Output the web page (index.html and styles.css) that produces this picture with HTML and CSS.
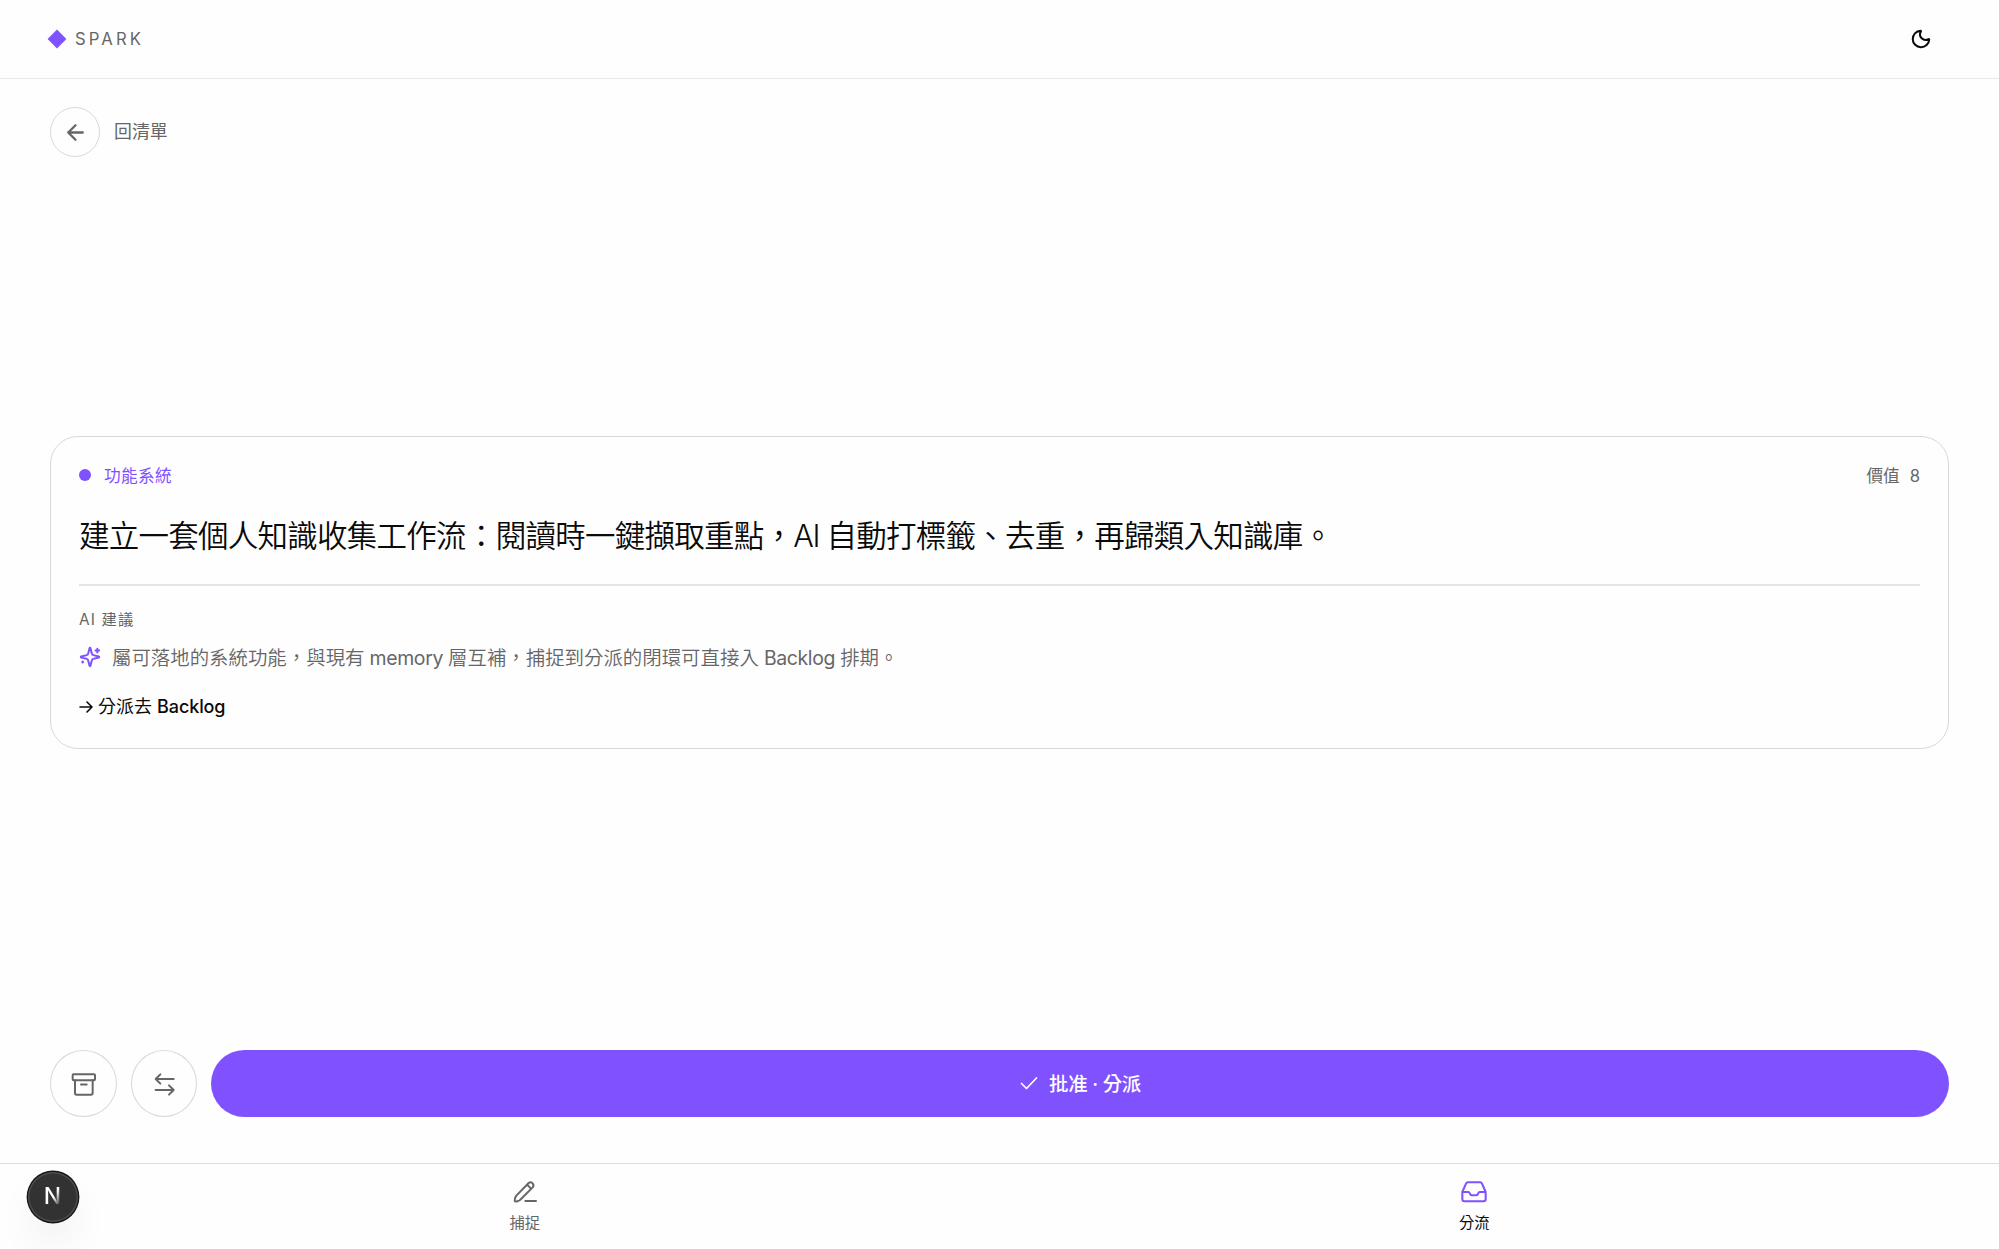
FILE: index.html
```html
<!DOCTYPE html>
<html lang="zh-Hant">

<head>
    <meta charset="UTF-8">
    <meta name="viewport" content="width=device-width, initial-scale=1.0">
    <title>Spark</title>
    <link rel="stylesheet" href="styles.css">
</head>

<body>
    <header class="header">
        <div class="brand">
            <svg class="brand-mark" viewBox="0 0 20 20"><path d="M10 .6 19.4 10 10 19.4.6 10z"/></svg>
            <span class="brand-name">SPARK</span>
        </div>
        <button class="theme-toggle" aria-label="切換主題">
            <svg class="icon" viewBox="0 0 24 24" stroke-width="2.2"><path d="M20.985 12.486a9 9 0 1 1-9.473-9.472c.405-.022.617.46.402.803a6 6 0 0 0 8.268 8.268c.344-.215.825-.004.803.401"/></svg>
        </button>
    </header>

    <div class="back-row">
        <button class="back-button" aria-label="返回">
            <svg class="icon" viewBox="0 0 24 24" stroke-width="2.2"><path d="m12 19-7-7 7-7M19 12H5"/></svg>
        </button>
        <span class="back-label">回清單</span>
    </div>

    <main class="main">
        <article class="card">
            <div class="card-top">
                <div class="category"><span class="dot"></span>功能系統</div>
                <div class="score"><span>價值</span><span>8</span></div>
            </div>
            <h1 class="title">建立一套個人知識收集工作流：閱讀時一鍵擷取重點，<span class="latin">AI </span>自動打標籤、去重，再歸類入知識庫。</h1>
            <div class="suggestion">
                <div class="suggestion-label">AI 建議</div>
                <div class="suggestion-body">
                    <svg class="icon sparkles" viewBox="0 0 24 24" stroke-width="2.2"><path d="M9.937 15.5A2 2 0 0 0 8.5 14.063l-6.135-1.582a.5.5 0 0 1 0-.962L8.5 9.936A2 2 0 0 0 9.937 8.5l1.582-6.135a.5.5 0 0 1 .963 0L14.063 8.5A2 2 0 0 0 15.5 9.937l6.135 1.581a.5.5 0 0 1 0 .964L15.5 14.063a2 2 0 0 0-1.437 1.437l-1.582 6.135a.5.5 0 0 1-.963 0z"/><path d="M20 3v4M22 5h-4M4 17v1M4.5 17.5h-1"/></svg>
                    <p class="suggestion-text">屬可落地的系統功能，與現有<span class="latin"> memory </span>層互補，捕捉到分派的閉環可直接入<span class="latin"> Backlog </span>排期。</p>
                </div>
                <div class="target">
                    <svg class="icon target-arrow" viewBox="0 0 14 14" stroke-width="1.6"><path d="M1 7h12M8 2l5 5-5 5"/></svg>
                    <span>分派去 <b>Backlog</b></span>
                </div>
            </div>
        </article>
    </main>

    <div class="actions">
        <button class="round-button" aria-label="封存">
            <svg class="icon" viewBox="0 0 84 84" stroke-width="6"><rect x="11" y="13" width="67" height="18" rx="3"/><path d="M18 31v38a5 5 0 0 0 5 5h43a5 5 0 0 0 5-5V31M36 43.500h17"/></svg>
        </button>
        <button class="round-button" aria-label="改派">
            <svg class="icon" viewBox="0 0 84 84" stroke-width="6"><path d="M71 27H17M31 13 17 27l14 14M17 60h54M57 46l14 14-14 14"/></svg>
        </button>
        <button class="approve-button">
            <svg class="icon check" viewBox="0 0 18 14" stroke-width="1.7"><path d="m1.500 7.500 5 5L16.500 2"/></svg>
            <span>批准 · 分派</span>
        </button>
    </div>

    <nav class="nav">
        <a class="nav-item">
            <svg class="icon" viewBox="0 0 84 84" stroke-width="6"><path d="M12 70c-2-2 0-12 4-17l37-38c8-6 19 5 12 13L27 66c-4 3-13 6-15 4zM48 20l12 12M43 69h32"/></svg>
            <span>捕捉</span>
        </a>
        <a class="nav-item active">
            <svg class="icon" viewBox="0 0 84 84" stroke-width="6.2"><path d="M7 42v22a6 6 0 0 0 6 6h58a6 6 0 0 0 6-6V42L66 17c-1-3-3-4-6-4H24c-3 0-5 1-6 4zM7 42h18c5 0 5 10 10 10h14c5 0 5-10 10-10h18"/></svg>
            <span>分流</span>
        </a>
    </nav>

    <div class="dev-badge"><span>N</span></div>
</body>

</html>
```
FILE: styles.css
```css
* {
    box-sizing: border-box;
}

body {
    margin: 0;
    height: 100vh;
    display: flex;
    flex-direction: column;
    overflow: hidden;
    background-color: #fefefe;
    color: #0a0a0a;
    font-family: Inter, "Noto Sans CJK TC", sans-serif;
    font-size: 18px;
}

button {
    display: flex;
    align-items: center;
    justify-content: center;
    padding: 0;
    border: none;
    background: none;
    color: #666;
    font-family: inherit;
}

.icon {
    display: block;
    flex: none;
    width: 28px;
    height: 28px;
    fill: none;
    stroke: currentColor;
    stroke-linecap: round;
    stroke-linejoin: round;
}

/* header */
.header {
    display: flex;
    align-items: center;
    justify-content: space-between;
    height: 79px;
    padding: 0 50px 0 47px;
    border-bottom: 1px solid #e8e8e8;
}

.brand {
    display: flex;
    align-items: center;
    gap: 8px;
}

.brand-mark {
    width: 20px;
    height: 20px;
    fill: #8052ff;
}

.brand-name {
    color: #666;
    font-size: 16.66px;
    letter-spacing: 3.1px;
}

.theme-toggle {
    width: 56px;
    height: 56px;
    color: #0a0a0a;
}

.theme-toggle .icon {
    width: 22px;
    height: 22px;
}

.back-row {
    display: flex;
    align-items: center;
    gap: 14px;
    padding: 28px 50px 0;
}

.back-button {
    width: 50px;
    height: 50px;
    border: 1px solid #d8d8d8;
    border-radius: 50%;
}

.back-button .icon {
    width: 25px;
    height: 25px;
}

.back-label {
    padding-bottom: 4px;
    color: #666;
    font-size: 17.9px;
}

/* card */
.main {
    flex: 1;
    display: flex;
    align-items: center;
    padding: 0 50px 22px;
}

.card {
    width: 100%;
    height: 313px;
    padding: 26px 28px 0;
    border: 1px solid #d8d8d8;
    border-radius: 28px;
}

.card-top {
    display: flex;
    align-items: center;
    justify-content: space-between;
    height: 24px;
    font-size: 16.66px;
}

.category {
    display: flex;
    align-items: center;
    gap: 13px;
    color: #8052ff;
    letter-spacing: 0.33px;
}

.dot {
    width: 12px;
    height: 12px;
    border-radius: 50%;
    background-color: #8052ff;
}

.score {
    display: flex;
    align-items: baseline;
    gap: 10px;
    color: #666;
}

.title {
    margin: 27px 0;
    font-size: 30.5px;
    font-weight: 350;
    line-height: 43px;
    letter-spacing: -0.74px;
}

.title .latin {
    letter-spacing: -1.3px;
}

.suggestion {
    border-top: 2px solid #e5e5e5;
    padding-top: 23px;
}

.suggestion-label {
    color: #666;
    font-size: 15.3px;
    line-height: 22px;
    letter-spacing: 1.2px;
}

.suggestion-body {
    display: flex;
    gap: 11px;
    margin-top: 11px;
}

.sparkles {
    width: 22px;
    height: 22px;
    margin-top: 4px;
    color: #8052ff;
}

.suggestion-text {
    margin: 0;
    color: #666;
    font-size: 19.43px;
    font-weight: 350;
    line-height: 32px;
}

.suggestion-text .latin {
    font-weight: 400;
    letter-spacing: -0.36px;
}

.target {
    display: flex;
    align-items: center;
    gap: 5px;
    margin-top: 21px;
    line-height: 24px;
}

.target b {
    font-weight: 500;
    letter-spacing: -0.1px;
}

.target-arrow {
    width: 14px;
    height: 14px;
}

/* actions */
.actions {
    display: flex;
    gap: 14px;
    padding: 0 50px 46px;
}

.round-button {
    width: 66.5px;
    height: 67px;
    border: 1px solid #d8d8d8;
    border-radius: 50%;
}

.approve-button {
    flex: 1;
    gap: 11px;
    height: 67px;
    padding: 0 0 2px 1px;
    border-radius: 34px;
    background-color: #8052ff;
    color: #fff;
    font-size: 19.43px;
    font-weight: 500;
    letter-spacing: -0.3px;
}

.check {
    width: 18px;
    height: 14px;
}

/* bottom navigation */
.nav {
    display: flex;
    height: 86px;
    padding: 14px 50px 0;
    border-top: 1px solid #dcdcdc;
}

.nav-item {
    flex: 1;
    display: flex;
    flex-direction: column;
    align-items: center;
    gap: 6px;
    color: #666;
    font-size: 15.3px;
    line-height: 22px;
}

.nav-item.active .icon {
    color: #8052ff;
}

.nav-item.active {
    color: #0a0a0a;
}

.dev-badge {
    position: fixed;
    left: 27.5px;
    bottom: 27.5px;
    display: flex;
    align-items: center;
    justify-content: center;
    width: 50px;
    height: 50px;
    border-radius: 50%;
    background-color: #323232;
    box-shadow: 0 0 0 1.4px #171717, inset 0 0 0 1.4px rgba(255, 255, 255, 0.14), 0 22px 44px -11px rgba(0, 0, 0, 0.16);
}

.dev-badge span {
    font-size: 23px;
    font-weight: 500;
    line-height: 1;
    background: linear-gradient(120deg, #fff 55%, rgba(255, 255, 255, 0.15) 85%);
    background-clip: text;
    -webkit-background-clip: text;
    color: transparent;
}
```
